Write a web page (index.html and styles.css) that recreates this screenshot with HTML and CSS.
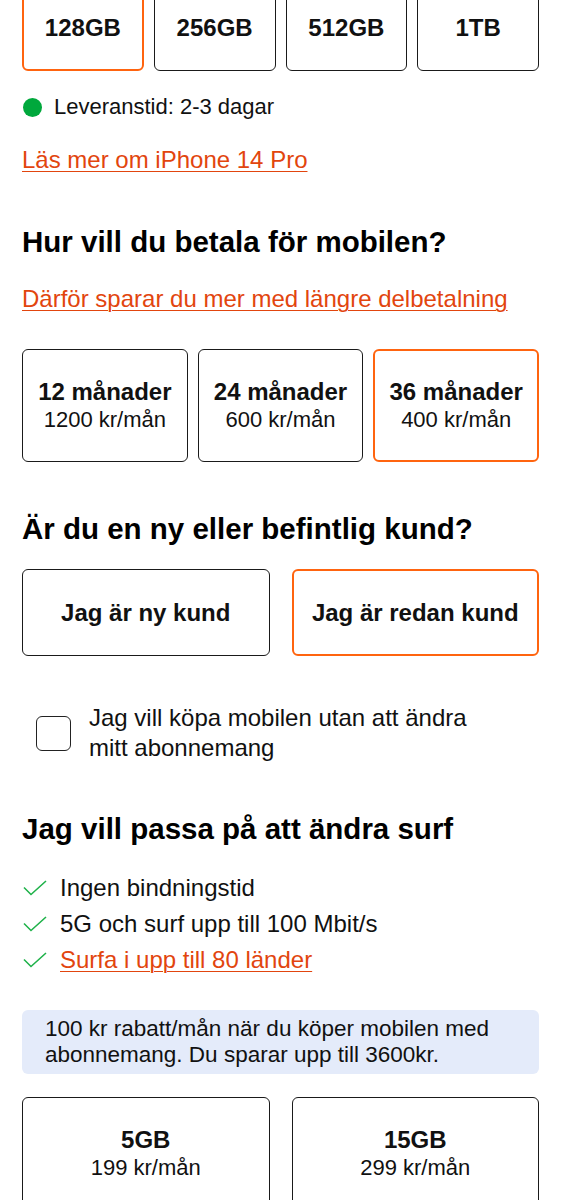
FILE: index.html
```html
<!DOCTYPE html>
<html lang="sv">
<head>
    <meta charset="UTF-8">
    <meta name="viewport" content="width=device-width, initial-scale=1.0">
    <title>iPhone 14 Pro</title>
    <link rel="stylesheet" href="styles.css">
</head>
<body>
    <div class="page">
        <!-- Lagring -->
        <div class="storage-row">
            <button class="option selected">128GB</button>
            <button class="option">256GB</button>
            <button class="option">512GB</button>
            <button class="option">1TB</button>
        </div>

        <div class="delivery">
            <span class="dot"></span>
            <span>Leveranstid: 2-3 dagar</span>
        </div>

        <a class="link read-more" href="#">Läs mer om iPhone 14 Pro</a>

        <!-- Betalning -->
        <h2 class="section-title pay-title">Hur vill du betala för mobilen?</h2>
        <a class="link why-link" href="#">Därför sparar du mer med längre delbetalning</a>

        <div class="payment-row">
            <button class="option plan-option">
                <span class="opt-title">12 månader</span>
                <span class="opt-price">1200 kr/mån</span>
            </button>
            <button class="option plan-option">
                <span class="opt-title">24 månader</span>
                <span class="opt-price">600 kr/mån</span>
            </button>
            <button class="option plan-option selected">
                <span class="opt-title">36 månader</span>
                <span class="opt-price">400 kr/mån</span>
            </button>
        </div>

        <!-- Kund -->
        <h2 class="section-title customer-title">Är du en ny eller befintlig kund?</h2>
        <div class="customer-row">
            <button class="option">Jag är ny kund</button>
            <button class="option selected">Jag är redan kund</button>
        </div>

        <label class="keep-sub">
            <span class="checkbox"></span>
            <span>Jag vill köpa mobilen utan att ändra mitt abonnemang</span>
        </label>

        <!-- Surf -->
        <h2 class="section-title surf-title">Jag vill passa på att ändra surf</h2>
        <ul class="perks">
            <li>
                <svg class="check" viewBox="0 0 24 16" width="24" height="16"><polyline points="1,7.5 8,14.5 23,1" /></svg>
                <span>Ingen bindningstid</span>
            </li>
            <li>
                <svg class="check" viewBox="0 0 24 16" width="24" height="16"><polyline points="1,7.5 8,14.5 23,1" /></svg>
                <span>5G och surf upp till 100 Mbit/s</span>
            </li>
            <li>
                <svg class="check" viewBox="0 0 24 16" width="24" height="16"><polyline points="1,7.5 8,14.5 23,1" /></svg>
                <a class="link" href="#">Surfa i upp till 80 länder</a>
            </li>
        </ul>

        <div class="info">
            100 kr rabatt/mån när du köper mobilen med abonnemang. Du sparar upp till 3600kr.
        </div>

        <div class="surf-row">
            <button class="option plan-option">
                <span class="opt-title">5GB</span>
                <span class="opt-price">199 kr/mån</span>
            </button>
            <button class="option plan-option">
                <span class="opt-title">15GB</span>
                <span class="opt-price">299 kr/mån</span>
            </button>
        </div>
    </div>
</body>
</html>
```

FILE: styles.css
```css
* {
    box-sizing: border-box;
}
body {
    font-family: 'Liberation Sans', Arial, sans-serif;
    color: #111;
    background-color: #ffffff;
    margin: 0;
    padding: 0 23px 0 22px;
}
.page {
    display: flex;
    flex-direction: column;
    align-items: flex-start;
}
.option {
    font-family: inherit;
    color: #111;
    background-color: #fff;
    border: 1px solid #1a1a1a;
    border-radius: 6px;
    font-size: 24px;
    font-weight: bold;
    cursor: pointer;
    padding: 0;
}
.option.selected {
    border: 2px solid #ff640f;
}
.storage-row {
    width: 100%;
    margin-top: -16px;
    display: grid;
    grid-template-columns: repeat(4, 1fr);
    gap: 10px;
}
.storage-row .option {
    height: 87px;
}
.delivery {
    display: flex;
    align-items: center;
    gap: 12px;
    margin-top: 21px;
    font-size: 22px;
    line-height: 30px;
}
.dot {
    width: 19px;
    height: 19px;
    border-radius: 50%;
    background-color: #00a83c;
    margin-left: 1px;
}
.link {
    color: #e2450e;
    text-decoration: underline;
    text-underline-offset: 3px;
    text-decoration-thickness: 1px;
}
.read-more {
    font-size: 24px;
    line-height: 30px;
    margin-top: 23px;
}
.section-title {
    font-size: 29.5px;
    line-height: 36px;
    margin: 0;
    color: #000;
}
.pay-title {
    margin-top: 49px;
}
.why-link {
    font-size: 24px;
    line-height: 30px;
    margin-top: 24px;
}
.payment-row {
    width: 100%;
    margin-top: 35px;
    display: grid;
    grid-template-columns: repeat(3, 1fr);
    gap: 10px;
}
.plan-option {
    height: 113px;
    display: flex;
    flex-direction: column;
    align-items: center;
    justify-content: center;
}
.opt-title {
    font-size: 24px;
    line-height: 28px;
    font-weight: bold;
}
.opt-price {
    font-size: 22px;
    line-height: 28px;
    font-weight: normal;
}
.customer-title {
    margin-top: 49px;
}
.customer-row, .surf-row {
    width: 100%;
    display: grid;
    grid-template-columns: 1fr 1fr;
    gap: 22px;
}
.customer-row {
    margin-top: 22px;
}
.customer-row .option {
    height: 87px;
}
.keep-sub {
    display: flex;
    align-items: center;
    gap: 18px;
    margin-top: 47px;
    padding-left: 14px;
    font-size: 24px;
    line-height: 30px;
    max-width: 470px;
}
.checkbox {
    flex: none;
    width: 35px;
    height: 35px;
    border: 1.5px solid #222;
    border-radius: 6px;
}
.surf-title {
    margin-top: 48px;
}
.perks {
    list-style: none;
    margin: 23px 0 0;
    padding: 0;
    font-size: 24px;
    line-height: 36px;
}
.perks li {
    display: flex;
    align-items: center;
    gap: 13px;
}
.check {
    fill: none;
    stroke: #1fb24a;
    stroke-width: 1.6;
    margin-left: 1px;
}
.info {
    width: 100%;
    margin-top: 32px;
    padding: 6px 23px;
    background-color: #e4ebfa;
    border-radius: 6px;
    font-size: 22.5px;
    line-height: 26px;
}
.surf-row {
    margin-top: 23px;
}
```
